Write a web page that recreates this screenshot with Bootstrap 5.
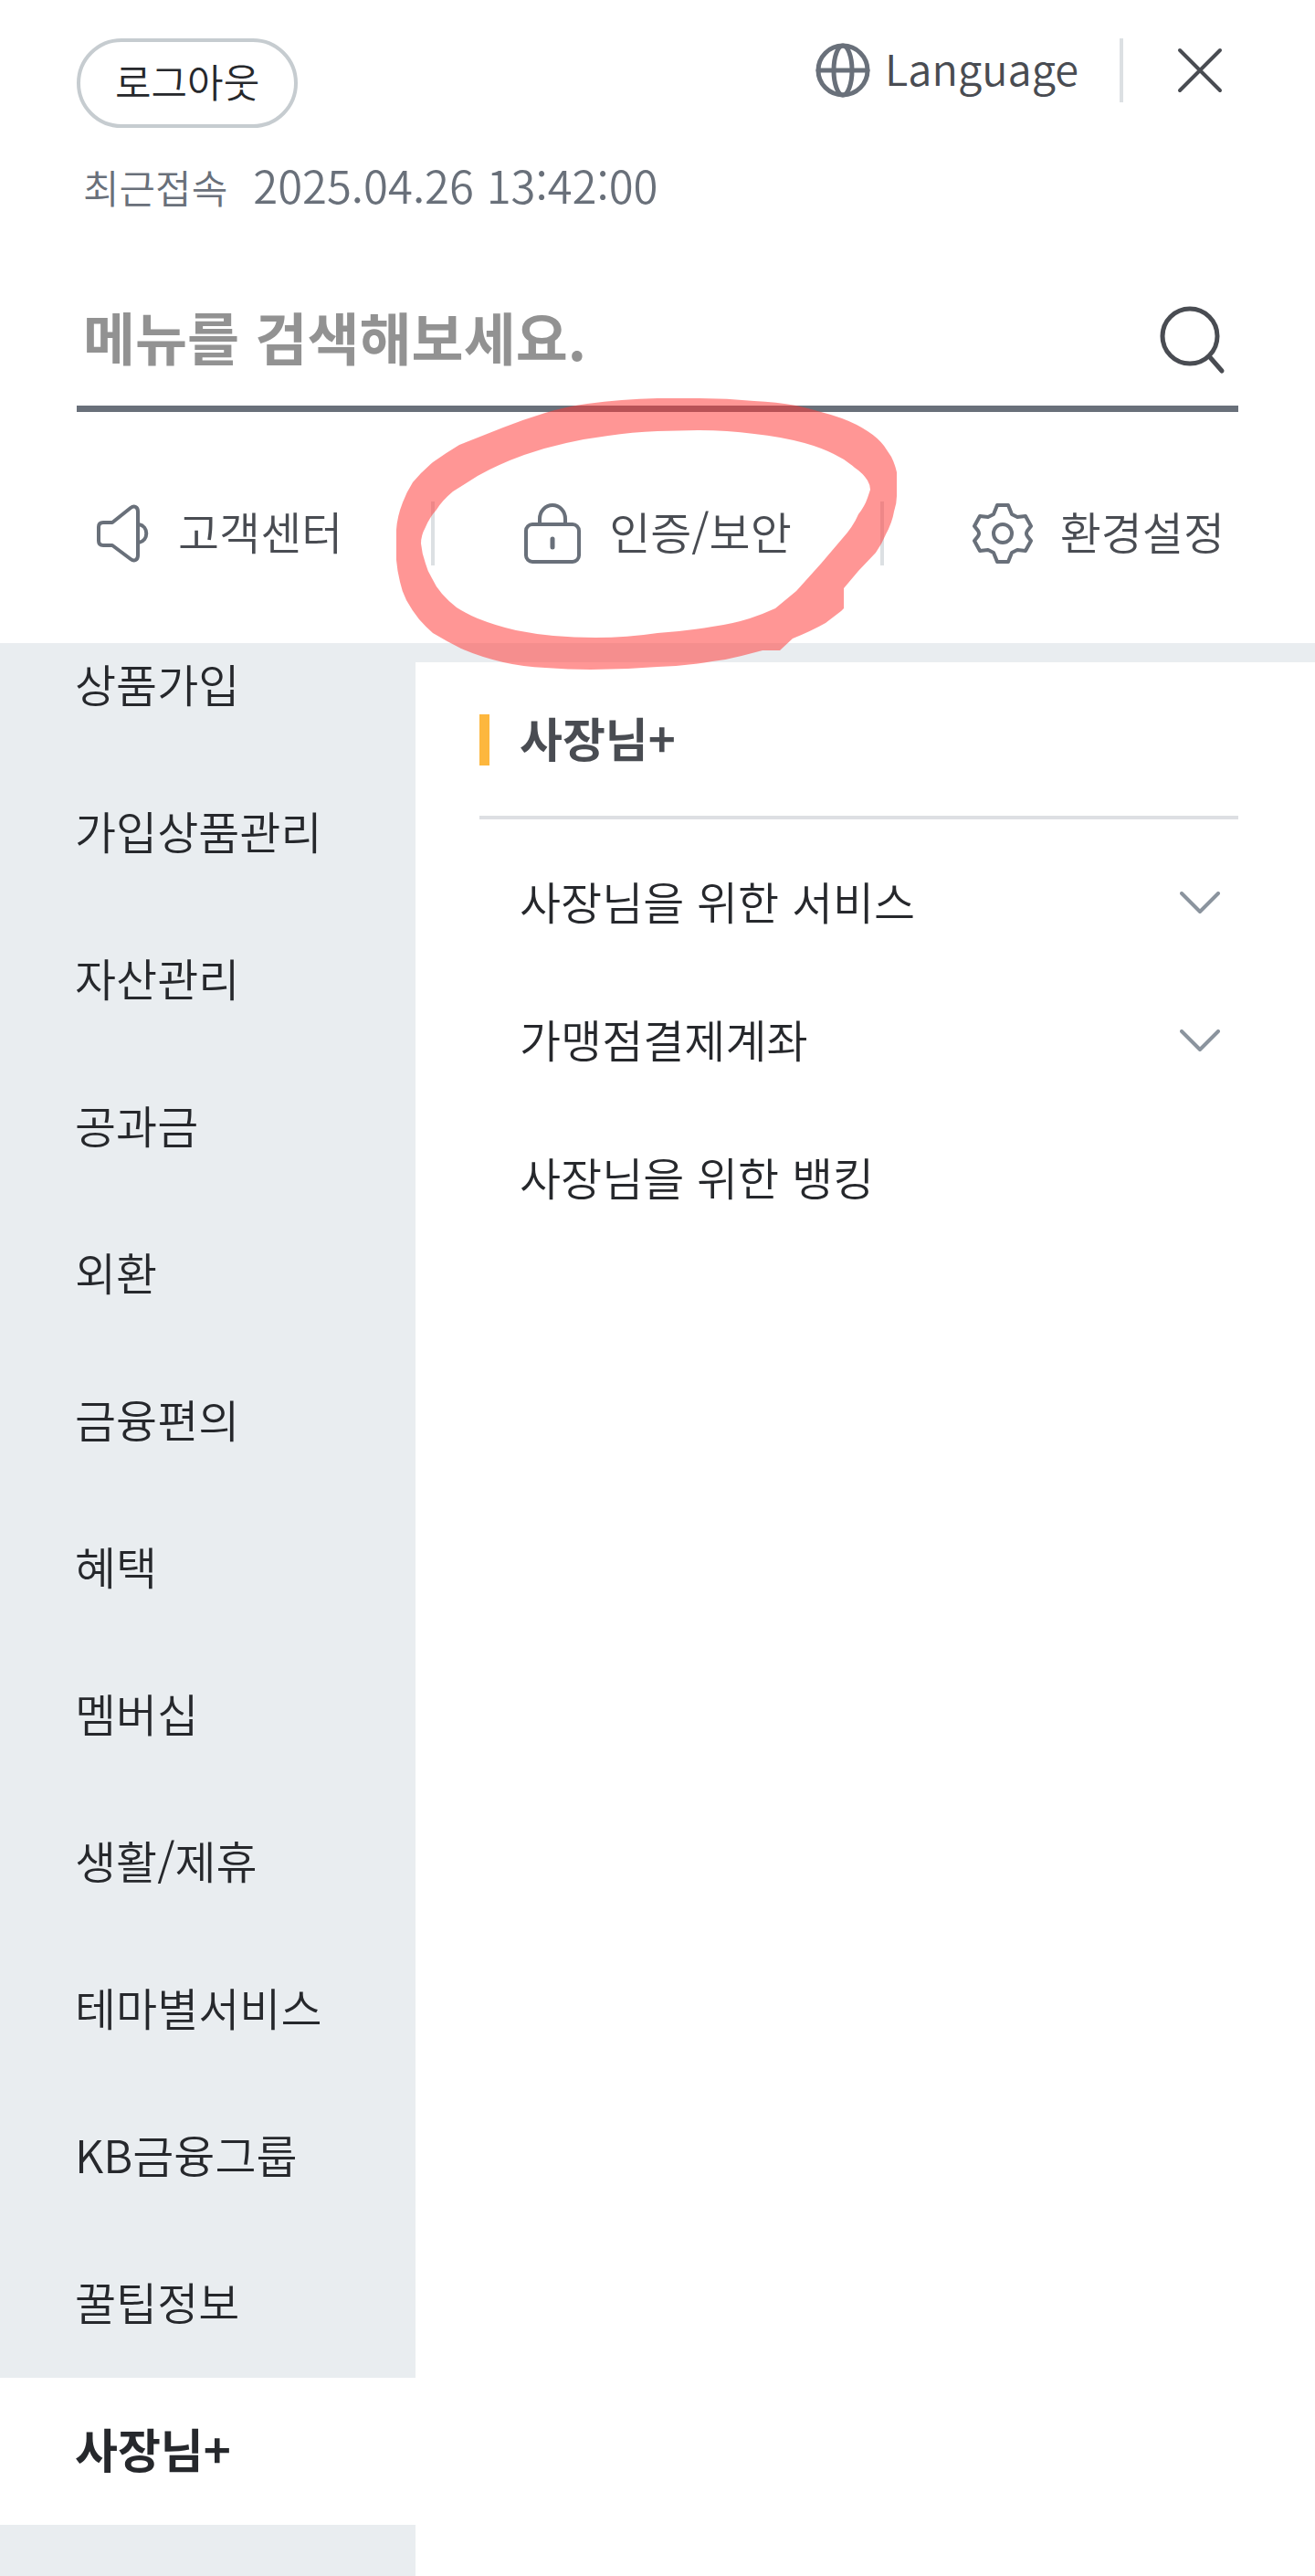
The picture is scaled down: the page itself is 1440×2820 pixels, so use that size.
<!DOCTYPE html>
<html lang="ko">
<head>
<meta charset="utf-8">
<meta name="viewport" content="width=device-width, initial-scale=1">
<title>전체메뉴</title>
<link href="https://cdn.jsdelivr.net/npm/bootstrap@5.3.0/dist/css/bootstrap.min.css" rel="stylesheet">
<style>
  :root { --ink: #26282c; --ink-soft: #494c52; --slate: #69707a; --mist: #e9edf0; --hair: #dddfe3; }
  body { font-family: "Noto Sans CJK KR", sans-serif; font-weight: 350; color: var(--ink); background: #fff; font-size: 49px; line-height: 72px; }
  a { color: inherit; text-decoration: none; }
  svg { display: block; flex: none; fill: none; stroke-linecap: round; stroke-linejoin: round; }
  .lift { padding-bottom: 6px; }
  .top-area { z-index: 2; padding: 42px 84px 0; }
  .logout-btn { height: 98px; padding: 0 38px 6px; border: 4px solid #c6ccd0; border-radius: 49px; background: #fff; font-size: 43px; line-height: 64px; font-weight: 350; color: var(--ink); }
  .plain-btn { border: 0; background: none; padding: 0; color: var(--ink-soft); font-weight: 350; }
  .lang-btn { font-size: 47px; line-height: 64px; gap: 16px; }
  .v-rule { width: 4px; height: 70px; background: #dce0e3; }
  .rule-gap { margin-left: 45px; }
  .last-visit { color: var(--slate); font-size: 43px; padding: 26px 7px 0; gap: 28px; }
  .visit-time { font-size: 49px; }
  .search-bar { margin-top: 58px; height: 153px; padding: 0 14px 6px 7px; border-bottom: 7px solid var(--slate); }
  .search-bar input { border: 0; outline: 0; background: none; padding: 0; font-size: 62px; line-height: 92px; font-weight: 700; min-width: 0; }
  .search-bar input::placeholder { color: #929292; opacity: 1; }
  .search-btn { padding-top: 8px; }
  .quick-nav { color: var(--ink-soft); padding: 94px 15px 81px 21px; }
  .quick-link { gap: 30px; }
  .marker { left: 434px; top: 436px; pointer-events: none; }
  .side-menu { width: 455px; background: var(--mist); overflow: hidden; min-height: 2116px; }
  .side-menu ul { margin: -33px 0 0; }
  .side-menu a { display: flex; align-items: center; height: 161px; padding: 0 0 8px 82px; }
  .side-menu a.active { background: #fff; font-size: 51px; font-weight: 700; }
  .detail { border-top: 21px solid var(--mist); }
  .detail-body { padding: 47px 84px 0 70px; }
  .detail-title { height: 125px; padding-bottom: 45px; border-bottom: 4px solid var(--hair); gap: 33px; }
  .detail-title h2 { font-size: 51px; line-height: 72px; font-weight: 700; color: var(--ink-soft); }
  .accent { width: 11px; height: 56px; background: #fdb73e; }
  .detail-list { padding: 16px 20px 0 44px; }
  .detail-list a { height: 151px; }
</style>
<script src="https://cdn.jsdelivr.net/npm/bootstrap@5.3.0/dist/js/bootstrap.bundle.min.js"></script>
</head>
<body>
<header class="top-area position-relative">
  <div class="d-flex justify-content-between align-items-start">
    <button type="button" class="logout-btn">로그아웃</button>
    <div class="d-flex align-items-center">
      <button type="button" class="plain-btn lang-btn d-flex align-items-center">
        <svg width="60" height="62" viewBox="0 0 60 62" stroke="#69707a" stroke-width="5" aria-hidden="true"><circle cx="30" cy="31" r="27"/><ellipse cx="30" cy="31" rx="10" ry="27"/><path d="M3 31h54"/></svg>
        <span class="lift">Language</span>
      </button>
      <span class="v-rule rule-gap"></span>
      <button type="button" class="plain-btn" aria-label="닫기">
        <svg width="126" height="70" viewBox="0 0 126 70" stroke="#494c52" stroke-width="4"><path d="M62 13l44 44M106 13L62 57"/></svg>
      </button>
    </div>
  </div>
  <div class="last-visit d-flex align-items-baseline"><span>최근접속</span><span class="visit-time">2025.04.26 13:42:00</span></div>
  <form class="search-bar d-flex align-items-center" role="search">
    <input class="flex-grow-1" type="text" placeholder="메뉴를 검색해보세요." aria-label="메뉴 검색">
    <button type="button" class="plain-btn search-btn" aria-label="검색">
      <svg width="74" height="78" viewBox="0 0 74 78" stroke="#494c52" stroke-width="5"><circle cx="35" cy="35" r="30"/><path d="M56 57l14 16"/></svg>
    </button>
  </form>
  <nav class="quick-nav d-flex justify-content-between align-items-center" aria-label="바로가기">
    <a href="#" class="quick-link d-flex align-items-center">
      <svg width="60" height="66" viewBox="0 0 60 66" stroke="#69707a" stroke-width="4" aria-hidden="true"><path d="M8 21h10L38 5c4-3 8-1 8 4v48c0 5-4 7-8 4L18 46H8q-5 0-5-5V26q0-5 5-5z"/><path d="M47 23c11 2 11 18 0 20"/></svg>
      <span class="lift">고객센터</span>
    </a>
    <span class="v-rule"></span>
    <a href="#" class="quick-link d-flex align-items-center">
      <svg width="64" height="68" viewBox="0 0 64 68" stroke="#69707a" stroke-width="4" aria-hidden="true"><rect x="3" y="24" width="58" height="41" rx="7"/><path d="M18 24v-6a14 15 0 0 1 28 0v6"/><path d="M32 40v9" stroke-width="5"/></svg>
      <span class="lift">인증/보안</span>
    </a>
    <span class="v-rule"></span>
    <a href="#" class="quick-link d-flex align-items-center">
      <svg width="66" height="68" viewBox="0 0 66 68" stroke="#69707a" stroke-width="4" aria-hidden="true"><path d="M27 3h12l4 10 6 3 9-1 6 11-4 5q-2 3 0 6l4 5-6 11-9-1-6 3-4 10H27l-4-10-6-3-9 1-6-11 4-5q2-3 0-6l-4-5 6-11 9 1 6-3z"/><circle cx="33" cy="34" r="10"/></svg>
      <span class="lift">환경설정</span>
    </a>
  </nav>
  <svg class="marker position-absolute" width="548" height="298" viewBox="434 436 548 298" aria-hidden="true"><path fill="#ff3836" fill-opacity=".53" fill-rule="evenodd" d="M720 436Q680 437 643 442Q620 445 597 452Q574 459 551 468L503 487Q488 496 474 506Q461 517 452 528Q445 539 441 550Q435 565 434 580V613Q435 625 438 637Q440 647 445 657Q451 668 459 678Q466 686 474 693Q489 702 505 710Q525 719 551 725Q573 730 597 731Q622 733 647 733Q684 733 720 730Q751 729 780 724Q797 722 812 718L835 712H854L868 699Q888 691 904 682L921 669L924 666V644L940 625L959 605Q966 595 970 585Q977 572 979 560Q982 551 982 543V517Q980 508 976 500L968 488Q961 479 950 472Q938 464 922 458Q911 454 899 451Q886 447 872 444Q850 440 826 439Q796 436 766 436Z M720 472Q692 473 666 477Q642 480 620 485Q597 490 574 498Q546 508 523 521L496 538Q484 548 478 558Q470 567 466 577Q461 586 461 595Q462 606 466 617Q468 625 473 633Q477 642 484 650Q491 658 500 665Q511 672 523 677Q543 685 565 690Q585 694 606 696Q629 698 652 698Q687 698 720 693Q751 691 780 686Q802 683 821 677Q836 672 849 666L872 647L899 617L922 590Q934 577 940 563Q947 554 950 545L953 536Q953 531 950 526Q945 518 936 512Q926 503 913 497Q899 490 881 485Q855 478 826 475Q796 471 766 471Z"/></svg>
</header>
<main class="d-flex">
  <nav class="side-menu flex-shrink-0" aria-label="전체메뉴">
    <ul class="list-unstyled">
      <li><a href="#">상품가입</a></li>
      <li><a href="#">가입상품관리</a></li>
      <li><a href="#">자산관리</a></li>
      <li><a href="#">공과금</a></li>
      <li><a href="#">외환</a></li>
      <li><a href="#">금융편의</a></li>
      <li><a href="#">혜택</a></li>
      <li><a href="#">멤버십</a></li>
      <li><a href="#">생활/제휴</a></li>
      <li><a href="#">테마별서비스</a></li>
      <li><a href="#">KB금융그룹</a></li>
      <li><a href="#">꿀팁정보</a></li>
      <li><a href="#" class="active" aria-current="page">사장님+</a></li>
    </ul>
  </nav>
  <section class="detail flex-grow-1">
    <div class="detail-body">
      <div class="detail-title d-flex align-items-center"><span class="accent"></span><h2 class="m-0 lift">사장님+</h2></div>
      <ul class="detail-list list-unstyled m-0">
        <li><a href="#" class="d-flex align-items-center justify-content-between"><span class="lift">사장님을 위한 서비스</span>
          <svg width="44" height="26" viewBox="0 0 44 26" stroke="#8b949e" stroke-width="4" aria-hidden="true"><path d="M2 2l20 20L42 2"/></svg></a></li>
        <li><a href="#" class="d-flex align-items-center justify-content-between"><span class="lift">가맹점결제계좌</span>
          <svg width="44" height="26" viewBox="0 0 44 26" stroke="#8b949e" stroke-width="4" aria-hidden="true"><path d="M2 2l20 20L42 2"/></svg></a></li>
        <li><a href="#" class="d-flex align-items-center"><span class="lift">사장님을 위한 뱅킹</span></a></li>
      </ul>
    </div>
  </section>
</main>
</body>
</html>
